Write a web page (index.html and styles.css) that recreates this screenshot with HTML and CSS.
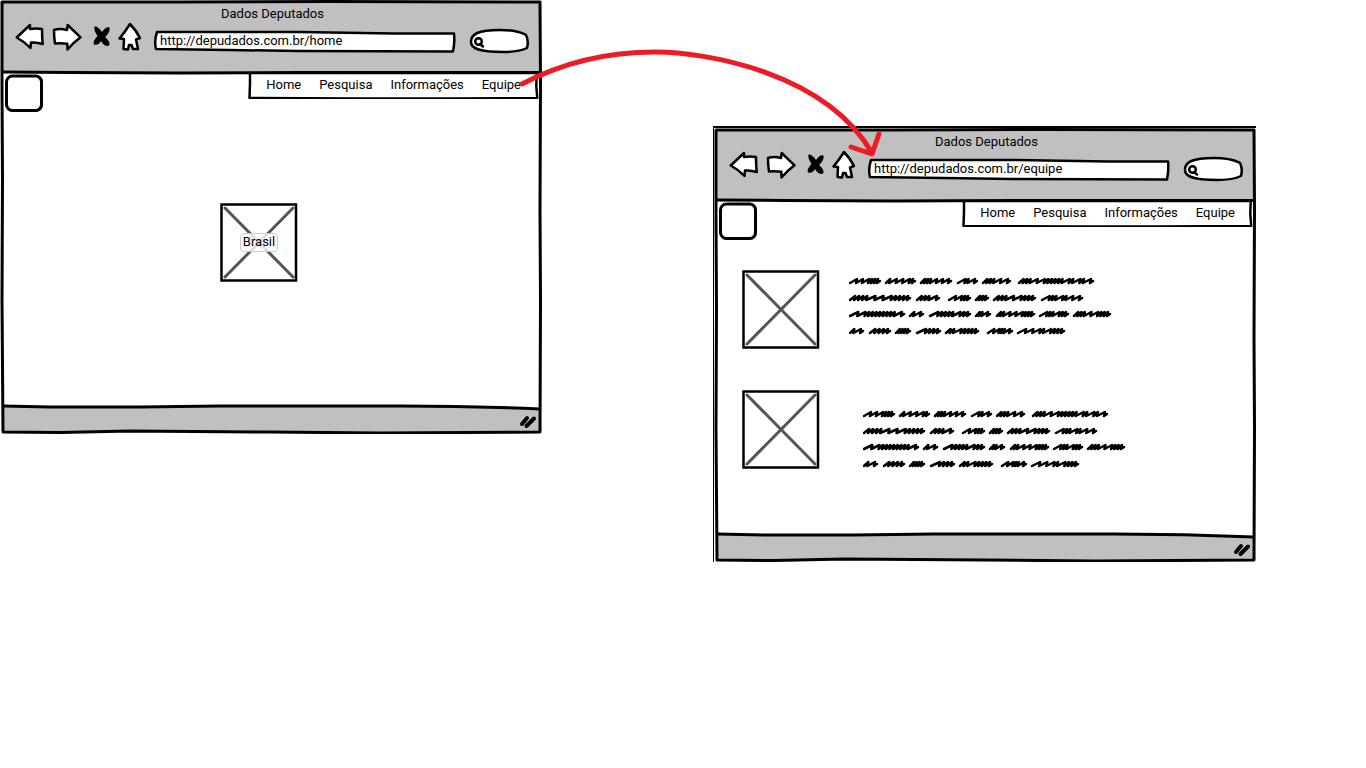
FILE: index.html
```html
<!DOCTYPE html>
<html lang="pt-BR">
<head>
<meta charset="utf-8">
<title>Dados Deputados</title>
<link rel="stylesheet" href="styles.css">
</head>
<body>
<svg class="defs" aria-hidden="true">
  <symbol id="frame" viewBox="0 0 542 434" preserveAspectRatio="none">
    <path class="chrome" d="M2 2H540L541 73H3ZM3 407L120 408 270 406H420Q500 407 540 409L541 432 380 433 200 432 2 433Z"/>
    <path class="line" d="M2 2L180 2 330 1.500 540 2L540.500 80 540 210 540.500 300 540 432L380 433 270 432 130 431 60 432.500 3 432L2 300 2.500 180 2 90Z"/>
    <path class="line" d="M3 72L70 72.500 180 73 300 72.500 540 72.500M3 406L50 407 140 407 220 406H400Q470 406 540 409"/>
  </symbol>
  <symbol id="back" viewBox="14 22 31 32"><path class="shape" d="M16.700 37.500L30 25 30 29Q36 28 42 29Q42 37 42.700 44Q37 42 31 42.500L30.500 48Q25 42 16.700 37.500Z"/></symbol>
  <symbol id="forward" viewBox="52 22 31 32"><path class="shape" d="M80.500 37.300L67.700 25 67 30Q60 28 54 30Q54 37 55 43.500Q61 43 67.300 43.700L67.500 49.500Q73 43 80.500 37.300Z"/></symbol>
  <symbol id="stop" viewBox="90 22 21 32"><path class="ink" d="M94.500 26.500Q98 26 102 32Q106 26 109.500 27.500Q110.500 32 105 37Q110 41 109.500 45Q105 48 101 41Q98 46 94 44.500Q92.500 41 97.500 36Q93.500 30 94.500 26.500Z"/></symbol>
  <symbol id="home" viewBox="118 22 23 32"><path class="shape" d="M130 24Q136 30 140 38L136 39.500 138 49 133 49 131.500 45H129L128 49.500 123.500 49 124 39 119.500 38.500Q125 32 130 24Z"/></symbol>
  <symbol id="field" viewBox="0 0 302 32" preserveAspectRatio="none"><path class="shape" d="M3 10L145 10 240 11.500 300 11.500Q301 20 299 29.500L145 29 75 28 2 27Q0 19 3 10Z"/></symbol>
  <symbol id="search" viewBox="469 22 62 32"><path class="shape" d="M471 42C471 34 478 30 500 30C518 30 522 33 526 35Q529 41 527 48Q519 52 503 52C480 52 471 49 471 42Z"/><circle class="lens" cx="478.500" cy="41.500" r="3.300"/><path class="lens" d="M480 44L483 46.500"/></symbol>
  <symbol id="logo" viewBox="5 74 38 38"><rect class="halo" x="6.500" y="76" width="36" height="35" rx="7"/><rect class="shape logo-box" x="6.500" y="76" width="35" height="34.500" rx="6"/></symbol>
  <symbol id="menu" viewBox="0 0 293 27" preserveAspectRatio="none"><path class="shape" d="M2 1H291L290.500 14 291.500 26 200 26.500 110 26.500 1.500 26 2 12Z"/></symbol>
  <symbol id="picture" viewBox="0 0 78 79"><path class="cross" d="M5 5L73 74M73 5L5 74"/><path class="thin" d="M1.500 1.500H76V77.500H1.500Z"/></symbol>
  <symbol id="grip" viewBox="519 413 20 16"><path class="grip" d="M522 424L527 418M526.500 426L534 418.500"/></symbol>
  <symbol id="scribble" viewBox="0 0 264 62"><path id="strokes" class="scribble" d=""/></symbol>
</svg>

<main class="canvas">
  <section class="window window-home" aria-label="Home">
    <svg class="backdrop" aria-hidden="true"><use href="#frame"/></svg>
    <header class="titlebar">
      <h1 class="title">Dados Deputados</h1>
      <div class="toolbar">
        <div class="buttons">
          <button class="tool" aria-label="Voltar"><svg width="31" height="32"><use href="#back"/></svg></button>
          <button class="tool" aria-label="Avançar"><svg width="31" height="32"><use href="#forward"/></svg></button>
          <button class="tool" aria-label="Parar"><svg width="21" height="32"><use href="#stop"/></svg></button>
          <button class="tool" aria-label="Início"><svg width="23" height="32"><use href="#home"/></svg></button>
        </div>
        <div class="address">
          <svg class="backdrop" aria-hidden="true"><use href="#field"/></svg>
          <input class="url" type="text" aria-label="Endereço" value="http://depudados.com.br/home">
        </div>
        <div class="search">
          <svg class="backdrop" aria-hidden="true"><use href="#search"/></svg>
          <input class="query" type="search" aria-label="Buscar">
        </div>
      </div>
    </header>
    <div class="topbar">
      <a class="logo" href="#" aria-label="Logo"><svg width="38" height="38"><use href="#logo"/></svg></a>
      <nav class="menu">
        <svg class="backdrop" aria-hidden="true"><use href="#menu"/></svg>
        <a href="#">Home</a><a href="#">Pesquisa</a><a href="#">Informações</a><a href="#">Equipe</a>
      </nav>
    </div>
    <div class="content hero">
      <figure class="picture">
        <svg width="78" height="79" aria-hidden="true"><use href="#picture"/></svg>
        <figcaption class="caption">Brasil</figcaption>
      </figure>
    </div>
    <footer class="statusbar"><svg width="20" height="16" aria-hidden="true"><use href="#grip"/></svg></footer>
  </section>

  <section class="window window-team" aria-label="Equipe">
    <svg class="backdrop" aria-hidden="true"><use href="#frame"/></svg>
    <header class="titlebar">
      <h1 class="title">Dados Deputados</h1>
      <div class="toolbar">
        <div class="buttons">
          <button class="tool" aria-label="Voltar"><svg width="31" height="32"><use href="#back"/></svg></button>
          <button class="tool" aria-label="Avançar"><svg width="31" height="32"><use href="#forward"/></svg></button>
          <button class="tool" aria-label="Parar"><svg width="21" height="32"><use href="#stop"/></svg></button>
          <button class="tool" aria-label="Início"><svg width="23" height="32"><use href="#home"/></svg></button>
        </div>
        <div class="address">
          <svg class="backdrop" aria-hidden="true"><use href="#field"/></svg>
          <input class="url" type="text" aria-label="Endereço" value="http://depudados.com.br/equipe">
        </div>
        <div class="search">
          <svg class="backdrop" aria-hidden="true"><use href="#search"/></svg>
          <input class="query" type="search" aria-label="Buscar">
        </div>
      </div>
    </header>
    <div class="topbar">
      <a class="logo" href="#" aria-label="Logo"><svg width="38" height="38"><use href="#logo"/></svg></a>
      <nav class="menu">
        <svg class="backdrop" aria-hidden="true"><use href="#menu"/></svg>
        <a href="#">Home</a><a href="#">Pesquisa</a><a href="#">Informações</a><a href="#">Equipe</a>
      </nav>
    </div>
    <div class="content team">
      <article class="member">
        <svg width="78" height="79" aria-hidden="true"><use href="#picture"/></svg>
        <svg class="bio" width="264" height="62" aria-hidden="true"><use href="#scribble"/></svg>
      </article>
      <article class="member member-indented">
        <svg width="78" height="79" aria-hidden="true"><use href="#picture"/></svg>
        <svg class="bio" width="264" height="62" aria-hidden="true"><use href="#scribble"/></svg>
      </article>
    </div>
    <footer class="statusbar"><svg width="20" height="16" aria-hidden="true"><use href="#grip"/></svg></footer>
  </section>

  <svg class="link-arrow" width="900" height="180" aria-hidden="true">
    <path d="M522 84C560 64 605 52 655 52S825 72 872 153M851 147L872 154 879 134"/>
  </svg>
</main>
<script src="scribble.js"></script>
</body>
</html>
```

FILE: styles.css
```css
* { box-sizing: border-box; }

body {
  margin: 0;
  background: #fff;
  color: #000;
  font-family: Roboto, "Noto Sans", sans-serif;
  font-size: 13px;
  line-height: 16px;
}

svg { display: block; }
.defs { position: absolute; width: 0; height: 0; }

.canvas { position: relative; min-height: 100vh; }

/* Sketched outlines */
.chrome { fill: #c0c0c0; }
.line { fill: none; stroke: #000; stroke-width: 3; stroke-linejoin: round; }
.shape { fill: #fff; stroke: #000; stroke-width: 2.5; stroke-linejoin: round; }
.logo-box { stroke-width: 3; }
.thin { fill: none; stroke: #000; stroke-width: 2.5; }
.cross { fill: #fff; stroke: #555; stroke-width: 3; stroke-linecap: round; }
.ink { fill: #000; }
.halo { fill: none; stroke: #2f7fc0; stroke-width: 2; }
.lens { fill: none; stroke: #000; stroke-width: 2.5; stroke-linecap: round; }
.grip { fill: none; stroke: #000; stroke-width: 4; stroke-linecap: round; }
.scribble { fill: none; stroke: #000; stroke-width: 2.5; stroke-linejoin: round; stroke-linecap: round; }

.backdrop {
  position: absolute;
  inset: 0;
  width: 100%;
  height: 100%;
  z-index: -1;
  overflow: visible;
}

/* Browser windows on the canvas */
.window {
  position: absolute;
  z-index: 0;
  display: flex;
  flex-direction: column;
  width: 542px;
  min-height: 434px;
}
.window-home { left: 0; top: 0; }
.window-team {
  left: 713px;
  top: 126px;
  width: 543px;
  min-height: 436px;
  border-top: 2px solid #000;
  border-left: 1px solid #000;
}

.titlebar { padding: 6px 11px 18px 14px; }
.title { margin: 0; font-size: 13px; font-weight: 400; text-align: center; }
.toolbar { display: flex; gap: 13px; }
.buttons { display: flex; gap: 7px; }
.tool { padding: 0; border: 0; background: none; }

.address, .search { position: relative; z-index: 0; display: flex; }
.address { flex: 1; padding: 6px 6px 0; }
.search { width: 62px; padding: 6px 6px 0 18px; }
.url, .query {
  width: 100%;
  min-width: 0;
  padding: 0;
  border: 0;
  outline: 0;
  background: none;
  color: inherit;
  font: inherit;
}

.topbar {
  display: flex;
  justify-content: space-between;
  align-items: flex-start;
  padding: 0 3px 0 5px;
}
.logo { padding-top: 2px; }
.menu {
  position: relative;
  z-index: 0;
  display: flex;
  gap: 18px;
  padding: 5px 18px 6px;
}
.menu a { color: inherit; text-decoration: none; }

.content { flex: 1; }
.hero { display: flex; justify-content: center; align-items: flex-start; padding: 91px 24px 0 0; }
.picture { display: grid; place-items: center; margin: 0; }
.picture > * { grid-area: 1 / 1; }
.caption {
  padding: 0 2px 1px;
  border: 1px solid #ccc;
  border-radius: 4px;
  background: rgba(255, 255, 255, 0.8);
}

.team { display: flex; flex-direction: column; gap: 41px; padding: 30px 28px; }
.member { display: flex; align-items: flex-start; gap: 29px; }
.bio { margin-top: 5px; }
.member-indented { gap: 43px; }
.member-indented .bio { margin-top: 18px; }

.statusbar { display: flex; justify-content: flex-end; padding: 5px 3px 5px; }

.link-arrow { position: absolute; left: 0; top: 0; pointer-events: none; }
.link-arrow path {
  fill: none;
  stroke: #ed1c24;
  stroke-width: 5;
  stroke-linecap: round;
  stroke-linejoin: round;
}
```

FILE: scribble.js
```js
// Each word is [start, end, strokes]; "l" is a loose stroke, "m" a tight one.
const lines = [
  [[0, 32, "lllmmm"], [36, 67, "mlllm"], [71, 103, "mmmlll"], [108, 129, "lml"], [133, 162, "mmmll"], [169, 245, "mmmllmmmmmlmlml"]],
  [[0, 62, "mmmmlllmmmm"], [67, 91, "mmml"], [99, 122, "llmm"], [126, 140, "mmm"], [144, 187, "mmmllmmm"], [192, 234, "lmmlmll"]],
  [[0, 56, "llmmmmmmmml"], [60, 75, "ml"], [80, 122, "lmmmmlmm"], [126, 142, "mml"], [147, 186, "mmlllmmm"], [190, 220, "lmmlmm"], [224, 262, "mmmllmmm"]],
  [[0, 15, "ml"], [20, 42, "mmmm"], [46, 62, "mmmm"], [67, 92, "lmmm"], [96, 130, "mmlmmmm"], [138, 164, "llmml"], [168, 216, "lllmlmmm"]]
];
const stepOf = { l: 6, m: 3 };

const path = lines.map((words, row) => {
  const y = 8 + Math.round(row * 16.7);
  return words.map(([start, end, strokes]) => {
    const units = [...strokes].reduce((sum, s) => sum + stepOf[s], 0);
    const scale = (end - start - 5) / units;
    let x = start + 1;
    let d = `M${x} ${y}`;
    for (const s of strokes) {
      const next = x + stepOf[s] * scale;
      d += `L${next + 1} ${y - 4}L${next} ${y}`;
      x = next;
    }
    return d + "l3 -2";
  }).join("");
}).join("");

document.getElementById("strokes").setAttribute("d", path);
```
